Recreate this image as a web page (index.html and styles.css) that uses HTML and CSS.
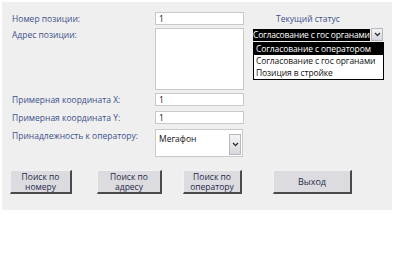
FILE: index.html
```html
<!DOCTYPE html>
<html>
<head>
<meta charset="utf-8">
<link rel="stylesheet" href="styles.css">
</head>
<body>
<div class="panel">
  <div class="top">
    <div class="form">
      <div class="label">Номер позиции:</div>
      <div class="field h13">1</div>
      <div class="label">Адрес позиции:</div>
      <div class="field area"></div>
      <div class="label">Примерная координата X:</div>
      <div class="field h13">1</div>
      <div class="label">Примерная координата Y:</div>
      <div class="field h13">1</div>
      <div class="label">Принадлежность к оператору:</div>
      <div class="field combo">
        <span>Мегафон</span>
        <span class="chev big"><svg width="7" height="5" viewBox="0 0 7 5"><path d="M1 1 L3.5 3.5 L6 1" fill="none" stroke="#333" stroke-width="1.3"/></svg></span>
      </div>
    </div>
    <div class="status">
      <div class="status-title">Текущий статус</div>
      <div class="status-select">
        <div class="sel-value">Согласование с гос органами</div>
        <span class="chev small"><svg width="7" height="5" viewBox="0 0 7 5"><path d="M1 1 L3.5 3.5 L6 1" fill="none" stroke="#333" stroke-width="1.3"/></svg></span>
      </div>
      <div class="dropdown">
        <div class="opt active">Согласование с оператором</div>
        <div class="opt">Согласование с гос органами</div>
        <div class="opt">Позиция в стройке</div>
      </div>
    </div>
  </div>
  <div class="buttons">
    <div class="btn b1">Поиск по<br>номеру</div>
    <div class="btn b2">Поиск по<br>адресу</div>
    <div class="btn b3">Поиск по<br>оператору</div>
    <div class="btn b4">Выход</div>
  </div>
</div>
</body>
</html>
```
FILE: styles.css
```css
html, body {
  margin: 0;
  padding: 0;
  background: #ffffff;
}
body {
  font-family: "Open Sans", "DejaVu Sans", sans-serif;
  font-size: 8.5px;
}
.panel {
  margin: 2px 0 0 2px;
  width: 390px;
  height: 208px;
  background: #efefef;
  box-sizing: border-box;
  padding: 10px 0 0 10px;
}
.top {
  display: flex;
  height: 158px;
}
.form {
  display: grid;
  grid-template-columns: 143px 89px;
  grid-template-rows: 16px 65px 18px 18px 28px;
  align-items: start;
}
.label {
  color: #3d4f8c;
  line-height: 13px;
  white-space: nowrap;
}
.field {
  background: #fff;
  border: 1px solid #c9c9c9;
  box-sizing: border-box;
  color: #111;
  padding-left: 3px;
  line-height: 11px;
}
.h13 { height: 13px; }
.area { height: 62px; }
.combo {
  height: 28px;
  width: 88px;
  display: flex;
  justify-content: space-between;
  align-items: flex-start;
  padding-top: 3px;
  padding-right: 0;
  position: relative;
}
.chev {
  display: flex;
  align-items: center;
  justify-content: center;
  box-sizing: border-box;
  background: linear-gradient(#f4f4f6, #d6d6dc);
  border: 1px solid #b8b8c0;
}
.chev.big {
  width: 12px;
  height: 21px;
  margin-top: 1px;
  margin-right: 1px;
}
.status {
  margin-left: 9px;
  position: relative;
  width: 131px;
}
.status-title {
  color: #3d4f8c;
  line-height: 13px;
  padding-left: 23px;
}
.status-select {
  display: flex;
  align-items: center;
  margin-top: 3px;
  height: 13px;
}
.sel-value {
  background: #000;
  color: #fff;
  width: 117px;
  height: 12px;
  line-height: 12px;
  white-space: nowrap;
  overflow: hidden;
  letter-spacing: -0.2px;
}
.chev.small {
  width: 12px;
  height: 13px;
  margin-left: 1px;
}
.dropdown {
  position: absolute;
  left: 0;
  top: 30px;
  width: 131px;
  background: #fff;
  border: 1px solid #000;
  box-sizing: border-box;
}
.opt {
  line-height: 12px;
  height: 12px;
  padding-left: 2px;
  color: #111;
  white-space: nowrap;
  letter-spacing: -0.1px;
}
.opt.active {
  background: #000;
  color: #fff;
}
.buttons {
  display: flex;
}
.btn {
  height: 24px;
  box-sizing: border-box;
  background: #dcdce0;
  border-top: 1px solid #f2f2f4;
  border-left: 1px solid #f2f2f4;
  border-right: 2px solid #4a4a4a;
  border-bottom: 2px solid #4a4a4a;
  color: #1f2a48;
  text-align: center;
  display: flex;
  align-items: center;
  justify-content: center;
  line-height: 10px;
}
.b1 { width: 62px; margin-left: -2px; }
.b2 { width: 65px; margin-left: 25px; }
.b3 { width: 59px; margin-left: 21px; }
.b4 { width: 79px; margin-left: 31px; font-size: 9px; }
```
